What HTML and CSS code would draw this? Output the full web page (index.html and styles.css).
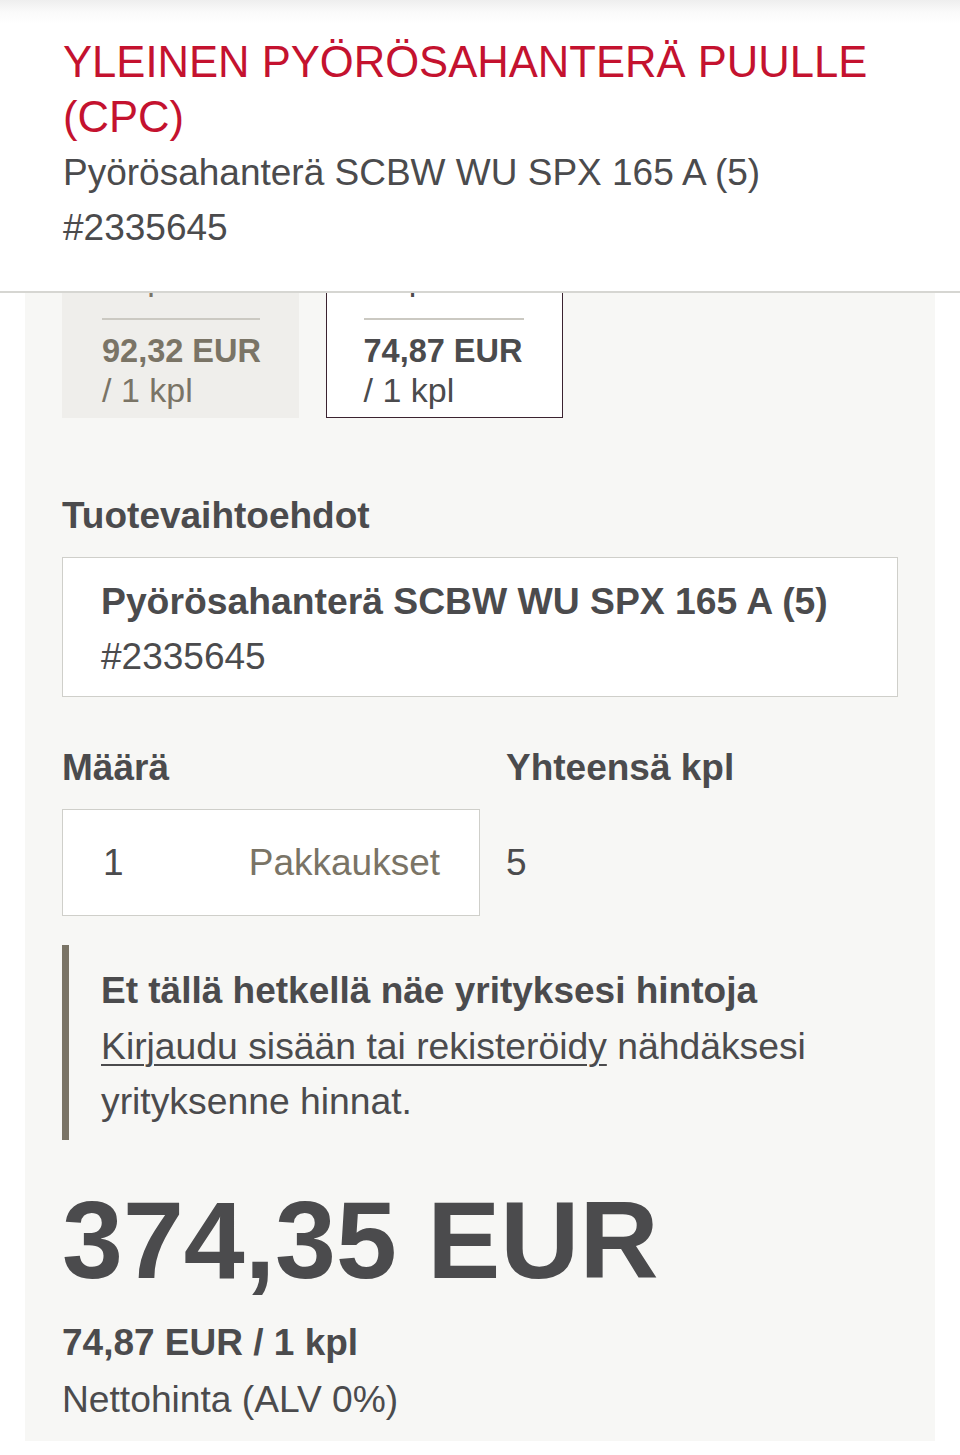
FILE: index.html
```html
<!DOCTYPE html>
<html lang="fi">
<head>
<meta charset="utf-8">
<title>Yleinen pyörösahanterä puulle (CPC)</title>
<link rel="stylesheet" href="styles.css">
</head>
<body>
<header class="sticky-head">
  <h1 class="title">YLEINEN PYÖRÖSAHANTERÄ PUULLE (CPC)</h1>
  <p class="subtitle">Pyörösahanterä SCBW WU SPX 165 A (5)</p>
  <p class="subtitle">#2335645</p>
</header>

<main class="panel">
  <div class="tiers">
    <div class="tier">
      <div class="tier-label">1 kpl</div>
      <div class="tier-sep"></div>
      <div class="tier-price">92,32 EUR</div>
      <div class="tier-unit">/ 1 kpl</div>
    </div>
    <div class="tier tier-active">
      <div class="tier-label">5 kpl</div>
      <div class="tier-sep"></div>
      <div class="tier-price">74,87 EUR</div>
      <div class="tier-unit">/ 1 kpl</div>
    </div>
  </div>

  <h2 class="section-title">Tuotevaihtoehdot</h2>
  <div class="variant">
    <div class="variant-name">Pyörösahanterä SCBW WU SPX 165 A (5)</div>
    <div class="variant-code">#2335645</div>
  </div>

  <div class="qty-grid">
    <div class="qty-label">Määrä</div>
    <div class="qty-label">Yhteensä kpl</div>
    <div class="qty-input">
      <span class="qty-value">1</span>
      <span class="qty-unit">Pakkaukset</span>
    </div>
    <div class="qty-total">5</div>
  </div>

  <div class="notice">
    <div class="notice-title">Et tällä hetkellä näe yrityksesi hintoja</div>
    <div class="notice-text"><a class="notice-link" href="#">Kirjaudu sisään tai rekisteröidy</a> nähdäksesi yrityksenne hinnat.</div>
  </div>

  <div class="total">374,35 EUR</div>
  <div class="unit-price">74,87 EUR / 1 kpl</div>
  <div class="net-note">Nettohinta (ALV 0%)</div>
</main>
</body>
</html>
```

FILE: styles.css
```css
html, body {
  margin: 0;
  padding: 0;
}

body {
  background: #ffffff;
  font-family: "Liberation Sans", Arial, Helvetica, sans-serif;
  color: #4b4b4d;
  -webkit-font-smoothing: antialiased;
}

.sticky-head {
  position: fixed;
  top: 0;
  left: 0;
  right: 0;
  z-index: 10;
  box-sizing: border-box;
  height: 293px;
  padding: 35px 63px 0 63px;
  background: linear-gradient(#eeeeee 0px, #fafafa 12px, #ffffff 24px);
  border-bottom: 2px solid #d6d6d2;
}

.title {
  margin: 0;
  font-size: 43.6px;
  line-height: 55px;
  font-weight: 400;
  color: #c4122f;
}

.subtitle {
  margin: 0;
  font-size: 37px;
  line-height: 55px;
  color: #4b4b4d;
}

.panel {
  margin: 0 25px;
  padding: 220px 37px 14px 37px;
  background: #f7f7f5;
}

.tiers {
  display: flex;
  gap: 27px;
}

.tier {
  box-sizing: border-box;
  width: 237px;
  padding: 38px 39px 8px 40px;
  background: #efeeeb;
  color: #7a7466;
  white-space: nowrap;
}

.tier-active {
  background: #ffffff;
  border: 1.5px solid #3b2330;
  padding: 36.5px 38.5px 6.5px 36.5px;
  color: #4b4b4d;
}

.tier-label {
  font-size: 34px;
  line-height: 40px;
}

.tier-sep {
  height: 2px;
  margin: 20px 0 11px;
  background: #cbc9c2;
}

.tier-price {
  font-size: 32.5px;
  line-height: 40px;
  font-weight: 700;
}

.tier-unit {
  font-size: 34px;
  line-height: 39px;
}

.section-title {
  margin: 76px 0 19px;
  font-size: 37px;
  line-height: 44px;
  font-weight: 700;
}

.variant {
  background: #ffffff;
  border: 1.5px solid #cfcfca;
  padding: 14.5px 38px 11.5px 38px;
  font-size: 37px;
  line-height: 56px;
}

.variant-name {
  font-weight: 700;
  font-size: 37.3px;
}

.qty-grid {
  display: grid;
  grid-template-columns: 418px 1fr;
  column-gap: 26px;
  row-gap: 19px;
  margin-top: 49px;
  align-items: center;
}

.qty-label {
  font-size: 37px;
  line-height: 44px;
  font-weight: 700;
}

.qty-input {
  box-sizing: border-box;
  height: 107px;
  display: flex;
  align-items: center;
  justify-content: space-between;
  padding: 0 39px 0 40px;
  background: #ffffff;
  border: 1.5px solid #cfcfca;
  font-size: 37px;
}

.qty-unit {
  color: #7a7466;
}

.qty-total {
  font-size: 37px;
}

.notice {
  margin-top: 29px;
  border-left: 7px solid #7a7466;
  padding: 18px 20px 10px 32px;
  font-size: 37.3px;
  line-height: 55.5px;
}

.notice-title {
  font-weight: 700;
  font-size: 37px;
}

.notice-link {
  color: #4b4b4d;
  text-decoration: underline;
  text-decoration-thickness: 2px;
  text-underline-offset: 5px;
}

.total {
  margin-top: 40px;
  font-size: 109.5px;
  line-height: 120px;
  font-weight: 700;
}

.unit-price {
  margin-top: 15px;
  font-size: 37px;
  line-height: 56px;
  font-weight: 700;
}

.net-note {
  font-size: 37.2px;
  line-height: 56px;
}
```
